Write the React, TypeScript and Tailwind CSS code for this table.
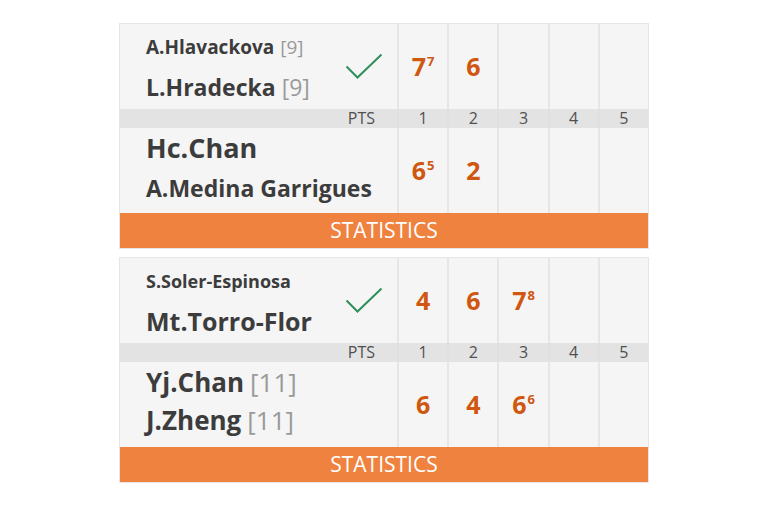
import React from "react";

type Score = { v: string; t?: string };
type Line = { name: string; seed?: string; size: number };
type Side = { lines: Line[]; pt: number; lh: number; scores: Score[]; winner?: boolean };
type Match = { top: Side; bottom: Side };

const matches: Match[] = [
  {
    top: {
      lines: [
        { name: "A.Hlavackova", seed: "[9]", size: 19 },
        { name: "L.Hradecka", seed: "[9]", size: 23 },
      ],
      pt: 3,
      lh: 40,
      winner: true,
      scores: [{ v: "7", t: "7" }, { v: "6" }],
    },
    bottom: {
      lines: [
        { name: "Hc.Chan", size: 27 },
        { name: "A.Medina Garrigues", size: 23 },
      ],
      pt: 0,
      lh: 40,
      scores: [{ v: "6", t: "5" }, { v: "2" }],
    },
  },
  {
    top: {
      lines: [
        { name: "S.Soler-Espinosa", size: 18 },
        { name: "Mt.Torro-Flor", size: 25 },
      ],
      pt: 3,
      lh: 40,
      winner: true,
      scores: [{ v: "4" }, { v: "6" }, { v: "7", t: "8" }],
    },
    bottom: {
      lines: [
        { name: "Yj.Chan", seed: "[11]", size: 26 },
        { name: "J.Zheng", seed: "[11]", size: 26 },
      ],
      pt: 1,
      lh: 38,
      scores: [{ v: "6" }, { v: "4" }, { v: "6", t: "6" }],
    },
  },
];

const Check = () => (
  <svg width="38" height="28" viewBox="0 0 38 28" className="shrink-0">
    <polyline
      points="1.5,13.5 12.5,24.5 36.5,1.5"
      fill="none"
      stroke="#2f8f5b"
      strokeWidth="2"
    />
  </svg>
);

const SideRow = ({ side }: { side: Side }) => (
  <div className="grid h-[85px] grid-cols-[277px_repeat(5,minmax(0,1fr))]">
    <div className="flex items-stretch justify-between pl-[26px] pr-[14px]">
      <div className="flex flex-col" style={{ paddingTop: side.pt }}>
        {side.lines.map((l, i) => (
          <div
            key={i}
            className="whitespace-nowrap font-bold text-[#3c3c3c]"
            style={{ fontSize: l.size, lineHeight: `${side.lh}px` }}
          >
            {l.name}
            {l.seed && (
              <span className="ml-[6px] font-normal text-[#9a9a9a]">{l.seed}</span>
            )}
          </div>
        ))}
      </div>
      {side.winner && (
        <div className="flex items-center">
          <Check />
        </div>
      )}
    </div>
    {[0, 1, 2, 3, 4].map((i) => {
      const s = side.scores[i];
      return (
        <div
          key={i}
          className="flex items-center justify-center border-l-2 border-[#e6e6e6]"
        >
          {s && (
            <span className="-mt-[2px] flex items-start font-bold text-[#d0570f]">
              <span className="text-[25px] leading-[30px]">{s.v}</span>
              {s.t && (
                <span className="ml-[1px] mt-[3px] text-[13px] leading-[14px]">{s.t}</span>
              )}
            </span>
          )}
        </div>
      );
    })}
  </div>
);

const Band = () => (
  <div className="grid h-[19px] grid-cols-[277px_repeat(5,minmax(0,1fr))] bg-[#e3e3e3] text-[16px] leading-[19px] text-[#505050]">
    <div className="pr-[22px] text-right">PTS</div>
    {[1, 2, 3, 4, 5].map((n) => (
      <div key={n} className="border-l-2 border-[#e0e0e0] text-center">
        {n}
      </div>
    ))}
  </div>
);

const Card = ({ m }: { m: Match }) => (
  <div className="w-[530px] border border-[#e6e6e6] bg-[#f5f5f5]">
    <SideRow side={m.top} />
    <Band />
    <SideRow side={m.bottom} />
    <div className="flex h-[35px] items-center justify-center bg-[#f08240] text-[21px] text-white">
      STATISTICS
    </div>
  </div>
);

export default function App() {
  return (
    <div
      className="min-h-[520px] w-[780px] bg-white pl-[119px] pt-[23px]"
      style={{ fontFamily: '"Open Sans", "Noto Sans", sans-serif' }}
    >
      <div className="flex flex-col gap-[8px]">
        {matches.map((m, i) => (
          <Card key={i} m={m} />
        ))}
      </div>
    </div>
  );
}
